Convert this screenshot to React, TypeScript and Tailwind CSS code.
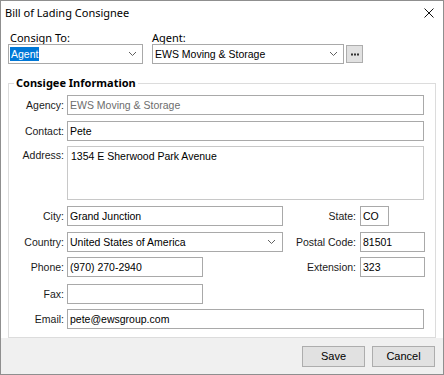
import React from "react";

const F = { fontFamily: '"Liberation Sans", Arial, sans-serif' };
const T = { fontFamily: '"Noto Sans", "Open Sans", sans-serif' };

function Chevron() {
  return (
    <svg width="9" height="6" viewBox="0 0 9 6" className="shrink-0">
      <path d="M1 1 L4.5 4.5 L8 1" fill="none" stroke="#606060" strokeWidth="1" />
    </svg>
  );
}

function Input({ w, value, muted, h = "h-[20px]" }: { w: string; value?: string; muted?: boolean; h?: string }) {
  return (
    <div
      className={`${w} ${h} shrink-0 border border-[#a9a9a9] bg-white flex items-center pl-[2px] text-[10.5px] leading-none whitespace-nowrap overflow-hidden ${muted ? "text-[#6d6d6d]" : "text-black"}`}
    >
      {value}
    </div>
  );
}

function Label({ children, w = "w-[58px]" }: { children: React.ReactNode; w?: string }) {
  return <div className={`${w} shrink-0 text-right pr-[3px] text-[10.5px] text-[#1a1a1a] leading-none whitespace-nowrap`}>{children}</div>;
}

function RLabel({ children }: { children: React.ReactNode }) {
  return <div className="flex-1 text-right pr-[4px] text-[10.5px] leading-none text-[#1a1a1a] whitespace-nowrap">{children}</div>;
}

export default function App() {
  return (
    <div className="w-[444px] h-[375px] border border-[#8f8f8f] bg-white flex flex-col" style={F}>
      {/* title bar */}
      <div className="h-[23px] flex items-center justify-between pl-[4px] pr-[9px] shrink-0">
        <span className="text-[11px] text-black leading-none" style={T}>Bill of Lading Consignee</span>
        <svg width="10" height="10" viewBox="0 0 10 10">
          <path d="M0.5 0.5 L9.5 9.5 M9.5 0.5 L0.5 9.5" stroke="#111" strokeWidth="1" />
        </svg>
      </div>

      {/* consign to / agent */}
      <div className="flex pl-[7px] pt-[7px] shrink-0">
        <div className="flex flex-col w-[135px]">
          <div className="h-[13px] pl-[2px] text-[11px] leading-[13px] text-black" style={T}>Consign To:</div>
          <div className="h-[20px] border border-[#a9a9a9] bg-white flex items-center justify-between pl-[1px] pr-[5px]">
            <span className="bg-[#0078d7] text-white text-[10.5px] leading-[14px] px-[1px]">Agent</span>
            <Chevron />
          </div>
        </div>
        <div className="flex flex-col ml-[9px] w-[192px]">
          <div className="h-[13px] text-[11px] leading-[13px] text-black" style={T}>Agent:</div>
          <div className="h-[20px] border border-[#a9a9a9] bg-white flex items-center justify-between pl-[2px] pr-[5px]">
            <span className="text-black text-[10.5px] leading-none">EWS Moving &amp; Storage</span>
            <Chevron />
          </div>
        </div>
        <div className="ml-[2px] mt-[14px] w-[17px] h-[18px] border border-[#adadad] bg-[#e1e1e1] flex items-center justify-center">
          <svg width="8" height="3" viewBox="0 0 8 3">
            <rect x="0" y="0.5" width="2" height="2" fill="#333" />
            <rect x="3" y="0.5" width="2" height="2" fill="#333" />
            <rect x="6" y="0.5" width="2" height="2" fill="#333" />
          </svg>
        </div>
      </div>

      {/* group box */}
      <div className="relative ml-[7px] mt-[19px] w-[428px] h-[255px] border border-[#dcdcdc] bg-white shrink-0 pt-[11px] pr-[10px]">
        <span className="absolute -top-[8px] left-[5px] bg-white px-[2px] text-[11px] font-bold leading-[14px] text-black" style={T}>
          Consigee Information
        </span>

        <div className="flex items-center">
          <Label>Agency:</Label>
          <Input w="w-[357px]" value="EWS Moving & Storage" muted />
        </div>
        <div className="flex items-center mt-[6px]">
          <Label>Contact:</Label>
          <Input w="w-[357px]" value="Pete" />
        </div>
        <div className="flex items-start mt-[5px]">
          <div className="pt-[4px]">
            <Label>Address:</Label>
          </div>
          <div className="w-[357px] h-[54px] border border-[#c8c8c8] bg-white pl-[3px] pt-[3px] text-[10.5px] leading-[12px] text-black">
            1354 E Sherwood Park Avenue
          </div>
        </div>
        <div className="flex items-center mt-[6px]">
          <Label>City:</Label>
          <Input w="w-[216px]" value="Grand Junction" />
          <RLabel>State:</RLabel>
          <Input w="w-[29px]" value="CO" />
          <div className="w-[36px] shrink-0" />
        </div>
        <div className="flex items-center mt-[6px]">
          <Label>Country:</Label>
          <div className="w-[216px] shrink-0 h-[20px] border border-[#a9a9a9] bg-white flex items-center justify-between pl-[2px] pr-[6px]">
            <span className="text-black text-[10.5px] leading-none">United States of America</span>
            <Chevron />
          </div>
          <RLabel>Postal Code:</RLabel>
          <Input w="w-[65px]" value="81501" />
        </div>
        <div className="flex items-center mt-[5px]">
          <Label>Phone:</Label>
          <Input w="w-[136px]" value="(970) 270-2940" />
          <RLabel>Extension:</RLabel>
          <Input w="w-[65px]" value="323" />
        </div>
        <div className="flex items-center mt-[7px]">
          <Label>Fax:</Label>
          <Input w="w-[136px]" value="" />
        </div>
        <div className="flex items-center mt-[5px]">
          <Label>Email:</Label>
          <Input w="w-[357px]" value="pete@ewsgroup.com" />
        </div>
      </div>

      {/* bottom bar */}
      <div className="flex-1 bg-[#f0f0f0] flex justify-end items-start pt-[8px] pr-[8px] gap-[7px]">
        <button className="w-[63px] h-[21px] border border-[#adadad] bg-[#e1e1e1] text-[11px] leading-none text-black" style={F}>
          Save
        </button>
        <button className="w-[63px] h-[21px] border border-[#adadad] bg-[#e1e1e1] text-[11px] leading-none text-black" style={F}>
          Cancel
        </button>
      </div>
    </div>
  );
}
